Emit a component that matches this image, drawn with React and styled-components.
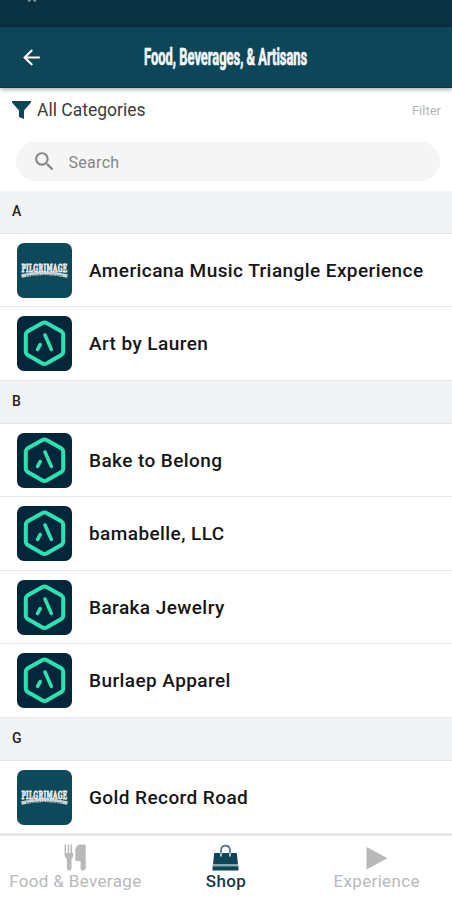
import React from 'react'
import styled, { createGlobalStyle } from 'styled-components'
import { MdArrowBack, MdSearch } from 'react-icons/md'

const GlobalStyle = createGlobalStyle`
    * {
        box-sizing: border-box;
    }

    body {
        margin: 0;
        background-color: #fff;
        font-family: Roboto, sans-serif;
    }
`

const Screen = styled.div`
    width: 452px;
    height: 900px;
    display: flex;
    flex-direction: column;
    overflow: hidden;
    background-color: #fff;
`

const StatusBar = styled.div`
    flex: none;
    height: 27px;
    padding-left: 28px;
    background-color: #0a3242;

    svg {
        display: block;
    }
`

const Header = styled.header`
    flex: none;
    height: 61px;
    display: grid;
    grid-template-columns: 62px 1fr 62px;
    align-items: center;
    background-color: #0d4659;
    border-bottom: 1px solid #0a3a4c;
    box-shadow: 0 1px 5px rgba(0, 0, 0, 0.4);

    button {
        display: flex;
        justify-content: center;
        padding: 0;
        background: none;
        border: none;
        color: white;
        font-size: 25px;
    }
`

const Title = styled.h1`
    margin: 0;
    justify-self: center;
    white-space: nowrap;
    color: #f4f7f8;
    font-size: 24px;
    font-weight: 700;
    line-height: 28px;
    -webkit-text-stroke: 0.7px #f4f7f8;
    transform: scaleX(0.538);
`

const FilterBar = styled.div`
    flex: none;
    height: 44px;
    padding: 0 11px 0 12px;
    display: flex;
    align-items: center;
    color: #3c3c3c;
    font-size: 17.5px;

    svg {
        margin-right: 6px;
    }

    .filter {
        margin-left: auto;
        color: #b5b5b5;
        font-size: 13px;
    }
`

const SearchBox = styled.div`
    flex: none;
    height: 39px;
    margin: 10px 12px 9.5px 16px;
    padding-left: 16px;
    display: flex;
    align-items: center;
    border-radius: 20px;
    background-color: #f5f5f5;
    color: #858585;
    font-size: 16px;
    letter-spacing: 0.3px;

    svg {
        margin-right: 11.5px;
        font-size: 25px;
    }

    span {
        padding-top: 1px;
    }
`

const List = styled.main`
    flex: 1;
    min-height: 0;
`

const SectionHeader = styled.div`
    height: 43px;
    padding: 0 0 1px 12px;
    display: flex;
    align-items: center;
    background-color: #f1f3f5;
    border-bottom: 1.5px solid #e3e5e6;
    color: #222;
    font-size: 14px;
    font-weight: 500;
`

const VendorRow = styled.div`
    height: 73.5px;
    padding: 1px 0 0 17px;
    display: flex;
    align-items: center;
    gap: 17px;
    border-bottom: 1.5px solid #e7e8e9;
    color: #161616;
    font-size: 19px;
    font-weight: 500;
    letter-spacing: 0.42px;
    white-space: nowrap;
`

const Tile = styled.div`
    flex: none;
    width: 55px;
    height: 55px;
    overflow: hidden;
    border-radius: 7px;
    background-color: ${({ $dark }) => ($dark ? '#04263b' : '#0d485b')};

    svg {
        display: block;
    }
`

const TabBar = styled.nav`
    flex: none;
    height: 66px;
    padding-top: 8px;
    display: grid;
    grid-template-columns: repeat(3, 1fr);
    border-top: 2px solid #e6e7e8;
    background-color: #fff;
`

const Tab = styled.div`
    display: flex;
    flex-direction: column;
    align-items: center;
    color: ${({ $active }) => ($active ? '#17384a' : '#b9b9b9')};
    font-size: 17px;
    font-weight: ${({ $active }) => ($active ? 500 : 400)};
    letter-spacing: 0.35px;
    line-height: 20px;
    white-space: nowrap;

    svg {
        display: block;
    }
`

const FunnelIcon = () => (
    <svg width='19' height='18' viewBox='0 0 19 18'>
        <path d='M0 0H19V1.5L12 9.5V18L7 16V9.5L0 1.5Z' fill='#0d4659' />
    </svg>
)

const HexLogo = () => (
    <svg width='55' height='55' viewBox='0 0 55 55' fill='none' stroke='#2be3b0' strokeWidth='4' strokeLinecap='round' strokeLinejoin='round'>
        <path d='M25.5 7Q27.5 5.9 29.5 7L44.7 15.6Q46.2 16.6 46.2 18.6V35.8Q46.2 37.8 44.7 38.8L29.5 47.4Q27.5 48.5 25.5 47.4L10.3 38.8Q8.8 37.8 8.8 35.8V18.6Q8.8 16.6 10.3 15.6Z' />
        <path d='M28 19L34.3 33.4M23.2 28.6L20.6 33.4' strokeWidth='3.6' />
    </svg>
)

const PilgrimageLogo = () => (
    <svg width='55' height='55' viewBox='0 0 55 55'>
        <text
            transform='translate(4.5 28.8) scale(1 1.8)'
            textLength='46'
            lengthAdjust='spacingAndGlyphs'
            fontFamily='DejaVu Serif, serif'
            fontWeight='700'
            fontSize='6.3'
            fill='#e9eef0'
            stroke='#e9eef0'
            strokeWidth='0.5'
        >
            PILGRIMAGE
        </text>
        <path d='M4.5 33Q27.5 27.6 50.5 33' fill='none' stroke='#c9d3d7' strokeWidth='3.4' />
        <path d='M9 33.2Q27.5 30.2 46 33.2' fill='none' stroke='#24495a' strokeWidth='0.9' strokeDasharray='1.5 1' />
    </svg>
)

const ForkKnifeIcon = () => (
    <svg width='22' height='27' viewBox='0 0 22 27' fill='currentColor'>
        <path d='M0.5 0.5H2V9H3.7V0.5H5.2V9H6.5V0.5H8V9H9.2V11Q9 14 7.5 15V24Q7.5 26.5 5.2 26.5Q2.9 26.5 2.9 24V15Q0.8 13.5 0.5 11Z' />
        <path d='M15.5 0.5H20.5Q21.7 0.5 21.7 2V24Q21.7 26.5 19.2 26.5Q16.6 26.5 16.6 24V17H12.5Q11.3 17 11.3 15.5V6Q11.8 1.8 15.5 0.5Z' />
    </svg>
)

const BagIcon = () => (
    <svg width='27' height='27' viewBox='0 0 27 27'>
        <path d='M2.2 9H24.8L26 20.5H1Z' fill='#0d4659' />
        <path d='M0.9 20.5H26.1L26.5 22.3H0.5Z' fill='#8fa9b3' />
        <path d='M0.7 22.3H26.3L26.6 26.6H0.4Z' fill='#0d4659' />
        <path d='M9 9V6.3Q9.4 1.6 13.5 1.6Q17.6 1.6 18 6.3V9' fill='none' stroke='#55707c' strokeWidth='1.7' />
        <path d='M9 9V12.5M18 9V12.5' stroke='#dfe7ea' strokeWidth='1.5' />
    </svg>
)

const PlayIcon = () => (
    <svg width='22' height='27' viewBox='0 0 22 27'>
        <path d='M0.5 3L21.5 14.3L0.5 25.5Z' fill='currentColor' />
    </svg>
)

const sections = [
    {
        letter: 'A',
        vendors: [
            { name: 'Americana Music Triangle Experience', pilgrimage: true },
            { name: 'Art by Lauren' },
        ],
    },
    {
        letter: 'B',
        vendors: [
            { name: 'Bake to Belong' },
            { name: 'bamabelle, LLC' },
            { name: 'Baraka Jewelry' },
            { name: 'Burlaep Apparel' },
        ],
    },
    {
        letter: 'G',
        vendors: [{ name: 'Gold Record Road', pilgrimage: true }],
    },
]

const tabs = [
    { label: 'Food & Beverage', Icon: ForkKnifeIcon },
    { label: 'Shop', Icon: BagIcon, active: true },
    { label: 'Experience', Icon: PlayIcon },
]

export default function App() {
    return (
        <Screen>
            <GlobalStyle />
            <StatusBar>
                <svg width='10' height='2' viewBox='0 0 10 2'>
                    <path d='M0 0H2.5V1.5H0ZM5.5 0H8V1.5H5.5Z' fill='#8fa5af' />
                </svg>
            </StatusBar>
            <Header>
                <button aria-label='Back'>
                    <MdArrowBack />
                </button>
                <Title>Food, Beverages, &amp; Artisans</Title>
            </Header>
            <FilterBar>
                <FunnelIcon />
                <span>All Categories</span>
                <span className='filter'>Filter</span>
            </FilterBar>
            <SearchBox>
                <MdSearch />
                <span>Search</span>
            </SearchBox>
            <List>
                {sections.map(({ letter, vendors }) => (
                    <section key={letter}>
                        <SectionHeader>{letter}</SectionHeader>
                        {vendors.map(({ name, pilgrimage }) => (
                            <VendorRow key={name}>
                                <Tile $dark={!pilgrimage}>
                                    {pilgrimage ? <PilgrimageLogo /> : <HexLogo />}
                                </Tile>
                                <span>{name}</span>
                            </VendorRow>
                        ))}
                    </section>
                ))}
            </List>
            <TabBar>
                {tabs.map(({ label, Icon, active }) => (
                    <Tab key={label} $active={active}>
                        <Icon />
                        <span>{label}</span>
                    </Tab>
                ))}
            </TabBar>
        </Screen>
    )
}
